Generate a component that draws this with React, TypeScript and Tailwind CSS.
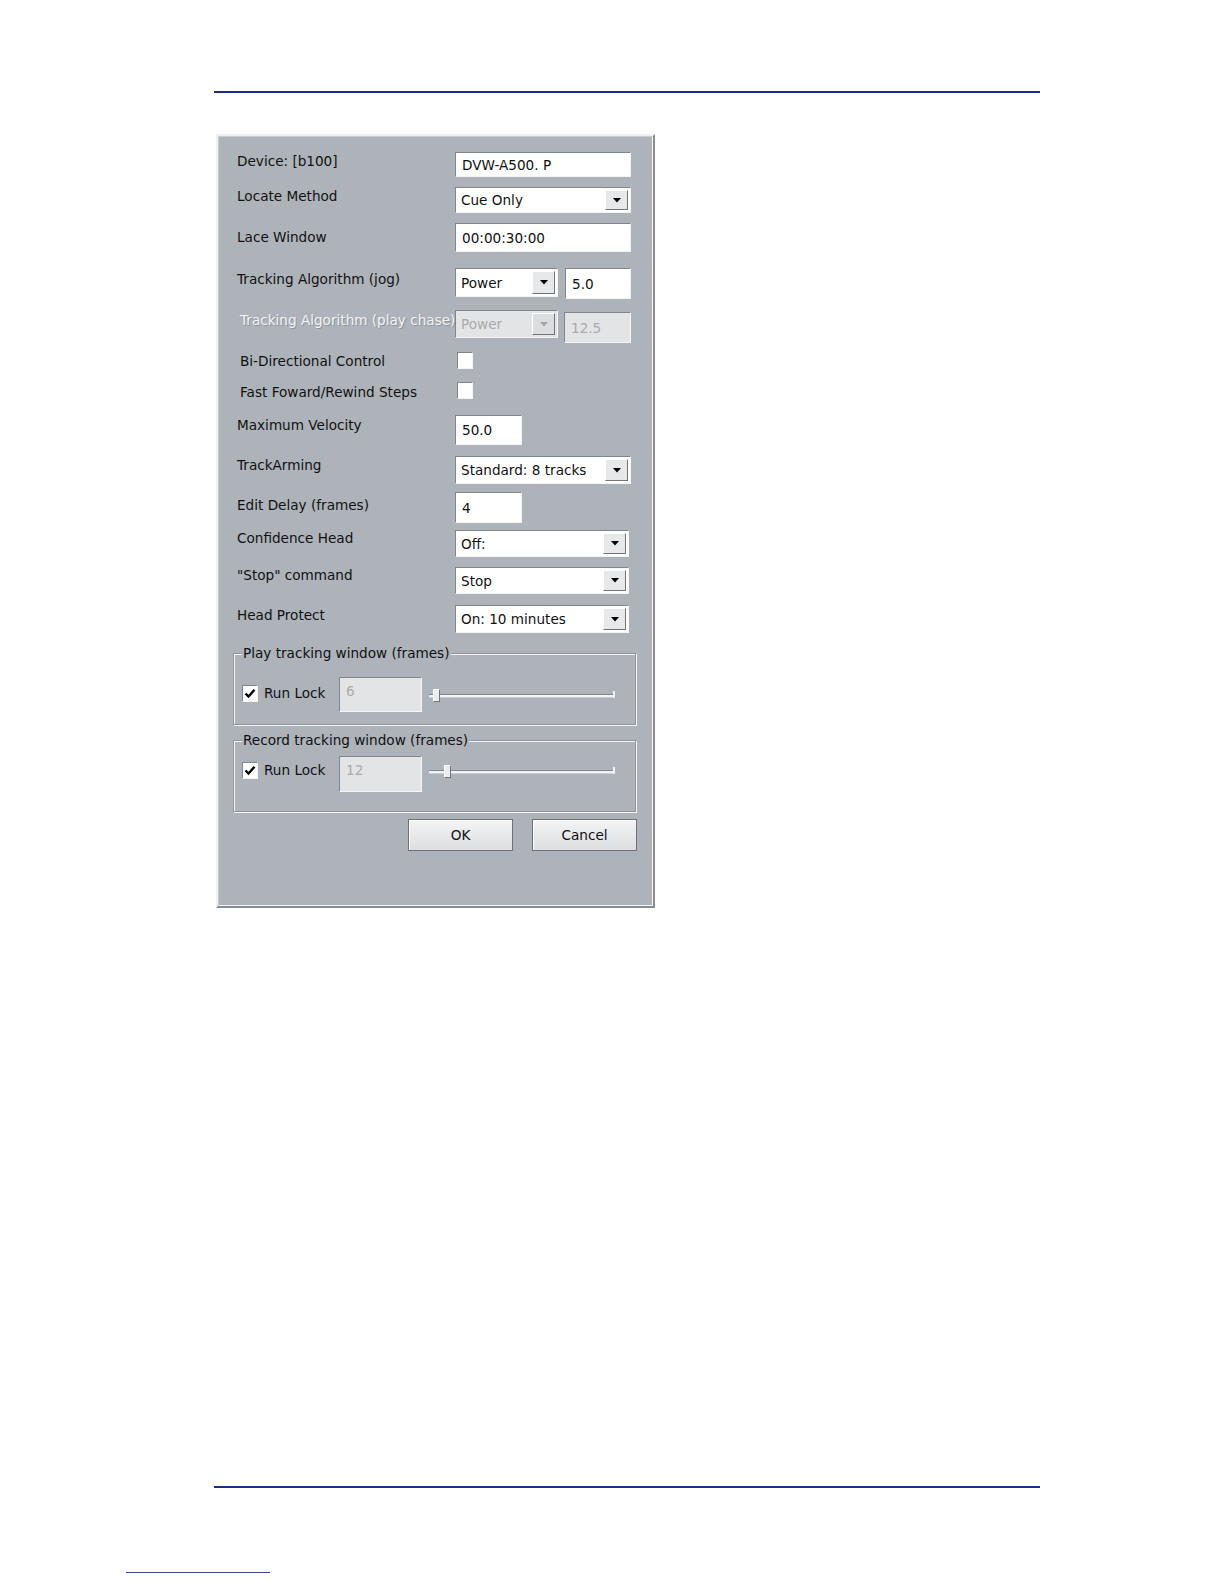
import React from "react";

const FONT = "font-['DejaVu_Sans',sans-serif] text-[13.6px] leading-[18px]";

function TextBox({
  w,
  h,
  value,
  disabled,
  top,
}: {
  w: string;
  h: string;
  value: string;
  disabled?: boolean;
  top?: boolean;
}) {
  return (
    <div
      className={`${w} ${h} shrink-0 flex ${top ? "items-start pt-[4px]" : "items-center"} pl-[6px] border border-t-[#7f868c] border-l-[#7f868c] border-b-[#f3f4f5] border-r-[#f3f4f5] ${
        disabled ? "bg-[#e3e4e5] text-[#a9abad]" : "bg-white text-[#111111]"
      }`}
    >
      {value}
    </div>
  );
}

function Arrow({ color }: { color: string }) {
  return (
    <svg width="8" height="5" viewBox="0 0 8 5">
      <path d="M0 0H8L4 4.6Z" fill={color} />
    </svg>
  );
}

function Select({
  w,
  h,
  value,
  disabled,
}: {
  w: string;
  h: string;
  value: string;
  disabled?: boolean;
}) {
  return (
    <div
      className={`${w} ${h} shrink-0 flex items-stretch p-[2px] border border-t-[#7f868c] border-l-[#7f868c] border-b-[#f3f4f5] border-r-[#f3f4f5] ${
        disabled ? "bg-[#e3e4e5] text-[#a9abad]" : "bg-white text-[#111111]"
      }`}
    >
      <div className="flex-1 flex items-center pl-[3px] overflow-hidden whitespace-nowrap">{value}</div>
      <div
        className={`w-[23px] flex items-center justify-center border border-t-white border-l-white border-r-[#6f757a] border-b-[#6f757a] ${
          disabled ? "bg-[#dcdddf]" : "bg-[#e7e8e9]"
        }`}
      >
        <Arrow color={disabled ? "#a3a6a9" : "#000000"} />
      </div>
    </div>
  );
}

function Check({ checked }: { checked?: boolean }) {
  return (
    <div className="w-[16px] h-[17px] shrink-0 bg-white border border-t-[#7f868c] border-l-[#7f868c] border-b-[#f3f4f5] border-r-[#f3f4f5] flex items-center justify-center">
      {checked && (
        <svg width="12" height="11" viewBox="0 0 12 11">
          <path d="M1.5 5.5L4.5 8.5L10.5 1.8" stroke="#000" strokeWidth="2.4" fill="none" />
        </svg>
      )}
    </div>
  );
}

function Slider({ thumb }: { thumb: number }) {
  return (
    <div className="relative w-[186px] h-[13px] shrink-0">
      <div className="absolute left-0 right-0 top-[5px] h-[4px] border-t border-t-[#80868c] border-b border-b-[#c9cdd1] bg-[#f1f2f3]" />
      <div className="absolute right-0 top-[2px] w-[2px] h-[7px] bg-[#f1f2f3]" />
      <div
        className="absolute top-0 w-[7px] h-[13px] bg-[#ebeced] border border-t-white border-l-white border-r-[#6f757a] border-b-[#6f757a]"
        style={{ left: thumb }}
      />
    </div>
  );
}

type Row = {
  label: string;
  h: string;
  lmt: string;
  cmt: string;
  indent?: boolean;
  disabled?: boolean;
  control: React.ReactNode;
};

export default function App() {
  const rows: Row[] = [
    {
      label: "Device: [b100]",
      h: "h-[35px]",
      lmt: "mt-[0px]",
      cmt: "mt-[0px]",
      control: <TextBox w="w-[176px]" h="h-[25px]" value="DVW-A500. P" />,
    },
    {
      label: "Locate Method",
      h: "h-[36px]",
      lmt: "mt-[0px]",
      cmt: "mt-[0px]",
      control: <Select w="w-[176px]" h="h-[26px]" value="Cue Only" />,
    },
    {
      label: "Lace Window",
      h: "h-[45px]",
      lmt: "mt-[5px]",
      cmt: "mt-[0px]",
      control: <TextBox w="w-[176px]" h="h-[29px]" value="00:00:30:00" />,
    },
    {
      label: "Tracking Algorithm (jog)",
      h: "h-[42px]",
      lmt: "mt-[2px]",
      cmt: "mt-[0px]",
      control: (
        <div className="flex items-start gap-[7px]">
          <Select w="w-[103px]" h="h-[29px]" value="Power" />
          <TextBox w="w-[66px]" h="h-[31px]" value="5.0" />
        </div>
      ),
    },
    {
      label: "Tracking Algorithm (play chase)",
      h: "h-[42px]",
      lmt: "mt-[1px]",
      cmt: "mt-[0px]",
      indent: true,
      disabled: true,
      control: (
        <div className="flex items-start gap-[6px]">
          <Select w="w-[103px]" h="h-[28px]" value="Power" disabled />
          <div className="mt-[2px]">
            <TextBox w="w-[67px]" h="h-[31px]" value="12.5" disabled />
          </div>
        </div>
      ),
    },
    {
      label: "Bi-Directional Control",
      h: "h-[30px]",
      lmt: "mt-[0px]",
      cmt: "mt-[0px] ml-[2px]",
      indent: true,
      control: <Check />,
    },
    {
      label: "Fast Foward/Rewind Steps",
      h: "h-[33px]",
      lmt: "mt-[1px]",
      cmt: "mt-[0px] ml-[2px]",
      indent: true,
      control: <Check />,
    },
    {
      label: "Maximum Velocity",
      h: "h-[41px]",
      lmt: "mt-[1px]",
      cmt: "mt-[0px]",
      control: <TextBox w="w-[67px]" h="h-[30px]" value="50.0" />,
    },
    {
      label: "TrackArming",
      h: "h-[36px]",
      lmt: "mt-[0px]",
      cmt: "mt-[0px]",
      control: <Select w="w-[176px]" h="h-[28px]" value="Standard: 8 tracks" />,
    },
    {
      label: "Edit Delay (frames)",
      h: "h-[37px]",
      lmt: "mt-[4px]",
      cmt: "mt-[0px]",
      control: <TextBox w="w-[67px]" h="h-[31px]" value="4" />,
    },
    {
      label: "Confidence Head",
      h: "h-[37px]",
      lmt: "mt-[0px]",
      cmt: "mt-[1px]",
      control: <Select w="w-[174px]" h="h-[27px]" value="Off:" />,
    },
    {
      label: "\"Stop\" command",
      h: "h-[39px]",
      lmt: "mt-[0px]",
      cmt: "mt-[1px]",
      control: <Select w="w-[174px]" h="h-[27px]" value="Stop" />,
    },
    {
      label: "Head Protect",
      h: "h-[28px]",
      lmt: "mt-[1px]",
      cmt: "mt-[0px]",
      control: <Select w="w-[174px]" h="h-[28px]" value="On: 10 minutes" />,
    },
  ];

  return (
    <div className={`w-[1224px] h-[1584px] bg-white overflow-hidden ${FONT}`}>
      <div className="pt-[91px]">
        <div className="ml-[214px] w-[826px] h-[2px] bg-[#1b2b8e]" />
      </div>

      {/* Dialog */}
      <div className="mt-[41px] ml-[216px] w-[439px] h-[774px] bg-[#adb3b9] border-2 border-t-[#eef0f2] border-l-[#eef0f2] border-r-[#858b91] border-b-[#858b91] shadow-[inset_1px_1px_0_#c9cdd1,inset_-1px_-1px_0_#f5f6f7] text-[#111111]">
        <div className="pt-[16px]">
          {rows.map((r) => (
            <div key={r.label} className={`flex items-start pl-[19px] ${r.h}`}>
              <div
                className={`w-[218px] shrink-0 whitespace-nowrap ${r.lmt} ${r.indent ? "pl-[3px]" : ""} ${
                  r.disabled ? "text-[#f2f3f4] [text-shadow:1px_1px_0_#8d9399]" : ""
                }`}
              >
                {r.label}
              </div>
              <div className={r.cmt}>{r.control}</div>
            </div>
          ))}
        </div>

        {/* Group 1 */}
        <fieldset className="mt-[11px] ml-[15px] w-[403px] border border-[#8f959b] shadow-[inset_1px_1px_0_#f4f5f6,1px_1px_0_#f4f5f6] pl-[8px] pt-[15px] pb-[12px]">
          <legend className="px-[1px] bg-[#adb3b9] leading-[18px]">Play tracking window (frames)</legend>
          <div className="flex items-start h-[35px]">
            <div className="mt-[8px]">
              <Check checked />
            </div>
            <div className="ml-[6px] w-[75px] mt-[7px] whitespace-nowrap">Run Lock</div>
            <TextBox w="w-[83px]" h="h-[35px]" value="6" disabled top />
            <div className="ml-[7px] mt-[12px]">
              <Slider thumb={4} />
            </div>
          </div>
        </fieldset>

        {/* Group 2 */}
        <fieldset className="mt-[6px] ml-[15px] w-[403px] border border-[#8f959b] shadow-[inset_1px_1px_0_#f4f5f6,1px_1px_0_#f4f5f6] pl-[8px] pt-[7px] pb-[19px]">
          <legend className="px-[1px] bg-[#adb3b9] leading-[18px]">Record tracking window (frames)</legend>
          <div className="flex items-start h-[36px]">
            <div className="mt-[6px]">
              <Check checked />
            </div>
            <div className="ml-[6px] w-[75px] mt-[5px] whitespace-nowrap">Run Lock</div>
            <TextBox w="w-[83px]" h="h-[36px]" value="12" disabled top />
            <div className="ml-[7px] mt-[9px]">
              <Slider thumb={15} />
            </div>
          </div>
        </fieldset>

        {/* Buttons */}
        <div className="mt-[7px] flex justify-end gap-[19px] pr-[16px]">
          <div className="w-[105px] h-[32px] flex items-center justify-center border border-[#6c7277] bg-gradient-to-b from-[#f3f4f5] to-[#dcdee0] shadow-[inset_1px_1px_0_#ffffff]">
            OK
          </div>
          <div className="w-[105px] h-[32px] flex items-center justify-center border border-[#6c7277] bg-gradient-to-b from-[#f3f4f5] to-[#dcdee0] shadow-[inset_1px_1px_0_#ffffff]">
            Cancel
          </div>
        </div>
      </div>

      <div className="mt-[578px] ml-[214px] w-[826px] h-[2px] bg-[#1b2b8e]" />
      <div className="mt-[84px] ml-[126px] w-[144px] h-[1px] bg-[#3a4a9e]" />
    </div>
  );
}
